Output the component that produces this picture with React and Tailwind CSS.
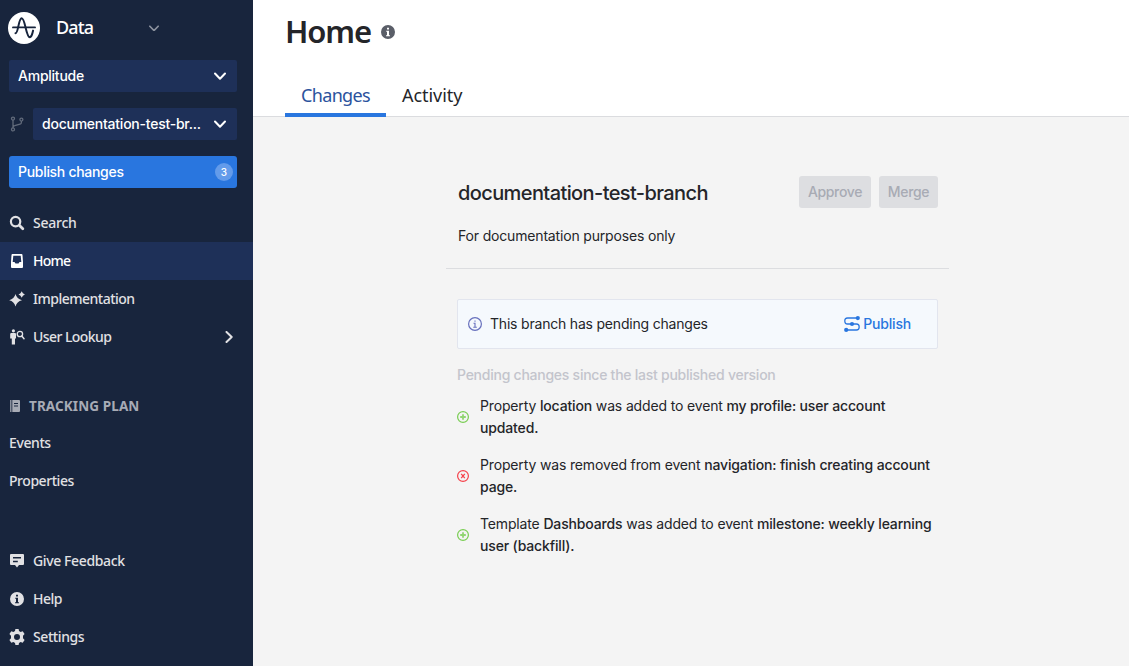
const plex = 'font-["Noto_Sans",sans-serif]';

function Logo() {
  return (
    <svg width="32" height="32" viewBox="0 0 32 32" fill="none">
      <circle cx="16" cy="16" r="16" fill="#fff" />
      <g stroke="#17243c" strokeLinecap="round" strokeLinejoin="round">
        <path d="M5 15.4H27" strokeWidth="1.9" />
        <path d="M7.5 21.3C10.4 21.3 10.4 6.3 13.7 6.2C17.2 6.3 18 25.1 21.8 25.2C24.2 24.8 24.2 21.4 25.1 18.6" strokeWidth="2" />
      </g>
    </svg>
  );
}

function Chevron({ className, width = 12, stroke = 2 }) {
  return (
    <svg className={className} width={width} height={width * 0.667} viewBox="0 0 12 8" fill="none" stroke="currentColor" strokeWidth={stroke} strokeLinecap="round" strokeLinejoin="round">
      <path d="M1 1.5L6 6.7L11 1.5" />
    </svg>
  );
}

const icons = {
  search: (
    <svg width="16" height="16" viewBox="0 0 16 16" fill="none" stroke="currentColor">
      <circle cx="6.6" cy="6.6" r="4.7" strokeWidth="2.2" />
      <path d="M10.5 10.5L13.8 13.8" strokeWidth="2.8" strokeLinecap="round" />
    </svg>
  ),
  home: (
    <svg width="16" height="16" viewBox="0 0 16 16" fill="currentColor">
      <path fillRule="evenodd" d="M3.4 1H12.6Q13.4 1 13.5 2L14 9V14Q14 15 13 15H3Q2 15 2 14V9L2.5 2Q2.6 1 3.4 1ZM4.3 2.7L3.7 9H5.5L6.5 10.6H9.5L10.5 9H12.3L11.7 2.7Z" />
    </svg>
  ),
  sparkle: (
    <svg width="16" height="16" viewBox="0 0 16 16" fill="currentColor">
      <path d="M6.5 3Q7.8 8 13 9.2Q7.8 10.4 6.5 15.5Q5.2 10.4 0.2 9.2Q5.2 8 6.5 3ZM12.7 0.2Q13.5 2.5 15.9 3.4Q13.5 4.2 12.7 6.7Q11.9 4.2 9.5 3.4Q11.9 2.5 12.7 0.2Z" />
    </svg>
  ),
  lookup: (
    <svg width="16" height="16" viewBox="0 0 16 16" fill="currentColor">
      <circle cx="4.4" cy="1.8" r="1.6" />
      <path d="M2.3 4H6Q7 4 7 5V9.5H6V15.5H2.8V9.5H1.2V5Q1.3 4 2.3 4Z" />
      <circle cx="10.9" cy="5" r="2.7" fill="none" stroke="currentColor" strokeWidth="1.3" />
      <path d="M12.8 7L15 9.7" stroke="currentColor" strokeWidth="1.5" strokeLinecap="round" />
    </svg>
  ),
  feedback: (
    <svg width="16" height="16" viewBox="0 0 16 16" fill="currentColor">
      <path fillRule="evenodd" d="M2 1H14Q15 1 15 2V11Q15 12 14 12H10L8 14.6L6 12H2Q1 12 1 11V2Q1 1 2 1ZM4 4V5.5H12V4ZM4 7.7V9.2H8.8V7.7Z" />
    </svg>
  ),
  info: (
    <svg width="16" height="16" viewBox="0 0 16 16" fill="currentColor">
      <path fillRule="evenodd" d="M8 1A7 7 0 1 1 8 15A7 7 0 1 1 8 1ZM7 3.7V5.5H9V3.7ZM6.2 6.7V7.7H7V11.3H6V12.3H10V11.3H9V6.7Z" />
    </svg>
  ),
  gear: (
    <svg width="16" height="16" viewBox="0 0 16 16" fill="currentColor">
      <path fillRule="evenodd" d="M6.4 0H9.6L10 2.1L11.6 3L13.7 2.2L15.6 5L14 6.7V9.3L15.6 11L13.7 13.8L11.6 13L10 13.9L9.6 16H6.4L6 13.9L4.4 13L2.3 13.8L0.4 11L2 9.3V6.7L0.4 5L2.3 2.2L4.4 3L6 2.1ZM8 5A3 3 0 1 0 8 11A3 3 0 1 0 8 5Z" />
    </svg>
  ),
};

function NavItem({ icon, label, active, arrow, spacing }) {
  return (
    <div className={`flex h-[38px] items-center gap-2 px-[9px] ${active ? 'bg-[#1e3058] text-white' : 'text-[#e1e1e4]'}`}>
      {icon && icons[icon]}
      <span className={`grow text-sm font-medium ${spacing}`}>{label}</span>
      {arrow && <Chevron className="mr-[9px] -rotate-90 text-[#e1e1e4]" width={12} />}
    </div>
  );
}

function Sidebar() {
  return (
    <nav className={`flex w-[253px] shrink-0 flex-col bg-[#18253d] ${plex}`}>
      <div className="flex h-[60px] items-center px-2 pb-1 text-white">
        <Logo />
        <span className="ml-4 w-[93px] pb-0.5 text-lg font-medium tracking-[-0.9px]">Data</span>
        <Chevron className="text-[#8b919e]" width={10} stroke={2} />
      </div>
      <div className='flex flex-col gap-4 pr-4 pl-[9px] font-["Inter",sans-serif] text-sm font-medium tracking-[-0.24px] text-white'>
        <div className="flex h-8 items-center justify-between rounded-xs bg-[#1e3058] pr-[11px] pl-[9px]">
          <span>Amplitude</span>
          <Chevron />
        </div>
        <div className="flex h-8 items-center">
          <svg className="mr-2 text-[#626b7b]" width="16" height="16" viewBox="0 0 16 16" fill="none" stroke="currentColor" strokeWidth="1.3">
            <circle cx="4" cy="2.6" r="1.5" />
            <circle cx="12.4" cy="3.6" r="1.5" />
            <circle cx="4" cy="13.4" r="1.5" />
            <path d="M4 4.1V11.9M12.4 5.1V6.2Q12.4 7.8 11 8.2L5.7 9.6Q4 10 4 11.5" />
          </svg>
          <div className="flex h-8 grow items-center justify-between rounded-xs bg-[#1e3058] pr-[11px] pl-[9px]">
            <span>documentation-test-br...</span>
            <Chevron />
          </div>
        </div>
        <div className="flex h-8 items-center justify-between rounded-[3px] bg-[#2976df] pr-1 pl-[9px]">
          <span className="tracking-[-0.3px]">Publish changes</span>
          <span className="flex size-[18px] items-center justify-center rounded-full bg-[#639bea] text-[10px] tracking-normal">3</span>
        </div>
      </div>
      <div className="mt-4">
        <NavItem icon="search" label="Search" spacing="tracking-[-0.25px]" />
        <NavItem icon="home" label="Home" active spacing="tracking-[-0.75px]" />
        <NavItem icon="sparkle" label="Implementation" spacing="tracking-[-0.5px]" />
        <NavItem icon="lookup" label="User Lookup" arrow spacing="tracking-[-0.56px]" />
      </div>
      <div className="mt-8 flex h-9 items-center gap-2 pl-[9px] text-[13.5px] font-bold text-[#a7abb5]">
        <svg width="12" height="14" viewBox="0 0 12 14" fill="currentColor">
          <path d="M1 1H2.5V13H1Z" opacity=".8" />
          <path fillRule="evenodd" d="M3.3 1H10Q11 1 11 2V12Q11 13 10 13H3.3ZM5 4V5H9V4ZM5 6.5V7.5H9V6.5Z" />
        </svg>
        <span className="tracking-[0.1px]">TRACKING PLAN</span>
      </div>
      <NavItem label="Events" spacing="tracking-[-0.4px]" />
      <NavItem label="Properties" spacing="tracking-[-0.45px]" />
      <div className="mt-auto pb-[10px]">
        <NavItem icon="feedback" label="Give Feedback" spacing="tracking-[-0.38px]" />
        <NavItem icon="info" label="Help" spacing="tracking-[-0.5px]" />
        <NavItem icon="gear" label="Settings" spacing="tracking-[-0.42px]" />
      </div>
    </nav>
  );
}

function Change({ removed, children }) {
  return (
    <li className="flex items-center gap-[11px]">
      <svg className={`shrink-0 ${removed ? 'text-[#f5414a]' : 'text-[#78cd51]'}`} width="12" height="12" viewBox="0 0 12 12" fill="none" stroke="currentColor">
        <circle cx="6" cy="6" r="5.4" strokeWidth="1.2" />
        {removed ? <path d="M4.2 3.9L7.8 8.1M7.8 3.9L4.2 8.1" strokeWidth="1.3" /> : <path d="M6 3.2V8.8M3.2 6H8.8" strokeWidth="1.8" opacity=".8" />}
      </svg>
      <p className="leading-[22px] tracking-[-0.15px]">{children}</p>
    </li>
  );
}

export default function App() {
  return (
    <div className="flex h-[666px] w-full overflow-hidden bg-[#f4f4f4] text-[#242529]">
      <Sidebar />
      <main className="flex grow flex-col">
        <header className={`flex h-[117px] flex-col justify-between border-b border-[#dbdcdf] bg-white pl-8 ${plex}`}>
          <div className="flex h-16 items-center gap-[9px]">
            <h1 className="pb-px text-[31px] font-semibold tracking-[-1.1px]">Home</h1>
            <span className="text-[#5a5e68]">{icons.info}</span>
          </div>
          <div className="-mb-px flex h-[43px] text-lg leading-[43px]">
            <div className="w-[101px] border-b-4 border-[#2976df] text-center leading-[43px] tracking-[-0.65px] text-[#2b529d]">Changes</div>
            <div className="pl-4 tracking-[-0.05px]">Activity</div>
          </div>
        </header>
        <section className='ml-[193px] w-[503px] pt-[59px] font-["Inter",sans-serif] text-sm tracking-[-0.2px]'>
          <div className="h-[93px] border-b border-[#dcdde0] pr-[11px] pl-3">
            <div className="flex h-8 items-center gap-2">
              <h2 className="grow pt-0.5 text-xl font-medium tracking-[-0.6px]">documentation-test-branch</h2>
              <button className="h-8 w-[72px] rounded-[3px] bg-[#dddee1] font-medium tracking-[-0.35px] text-[#a8abb4]">Approve</button>
              <button className="h-8 w-[59px] rounded-[3px] bg-[#dddee1] font-medium tracking-[-0.35px] text-[#a8abb4]">Merge</button>
            </div>
            <p className="mt-[18px] tracking-[-0.17px]">For documentation purposes only</p>
          </div>
          <div className="mt-[30px] mr-[11px] ml-[11px] flex h-[50px] items-center rounded-xs border border-[#e2e5ee] bg-[#f5f9fd] pr-[26px] pl-2.5">
            <svg className="text-[#6770bd]" width="14" height="14" viewBox="0 0 14 14" fill="none" stroke="currentColor">
              <circle cx="7" cy="7" r="6.4" strokeWidth="1.2" />
              <path d="M5.5 6.3H7V10M5.3 10.2H8.8M7 3.4V4.7" strokeWidth="1.1" />
            </svg>
            <span className="ml-2 grow">This branch has pending changes</span>
            <span className="flex items-center gap-[3px] font-medium text-[#2976df]">
              <svg width="16" height="16" viewBox="0 0 16 16" fill="currentColor">
                <path d="M13.5 2H3.5Q0.8 2 0.8 5Q0.8 8 3.5 8H12.5Q15.2 8 15.2 11Q15.2 14 12.5 14H2.5" fill="none" stroke="currentColor" strokeWidth="1.3" />
                <circle cx="13.8" cy="2.1" r="2.1" />
                <circle cx="8" cy="8" r="2.1" />
                <circle cx="2.2" cy="13.9" r="2.1" />
              </svg>
              Publish
            </span>
          </div>
          <h3 className="mt-4 ml-[11px] font-medium tracking-[-0.25px] text-[#c3c4cc]">Pending changes since the last published version</h3>
          <ul className="mt-2.5 ml-[11px] flex w-[480px] flex-col gap-[15px] [&_b]:font-medium">
            <Change>Property <b>location</b> was added to event <b>my profile: user account updated.</b></Change>
            <Change removed>Property was removed from event <b>navigation: finish creating account page.</b></Change>
            <Change>Template <b>Dashboards</b> was added to event <b>milestone: weekly learning user (backfill).</b></Change>
          </ul>
        </section>
      </main>
    </div>
  );
}
